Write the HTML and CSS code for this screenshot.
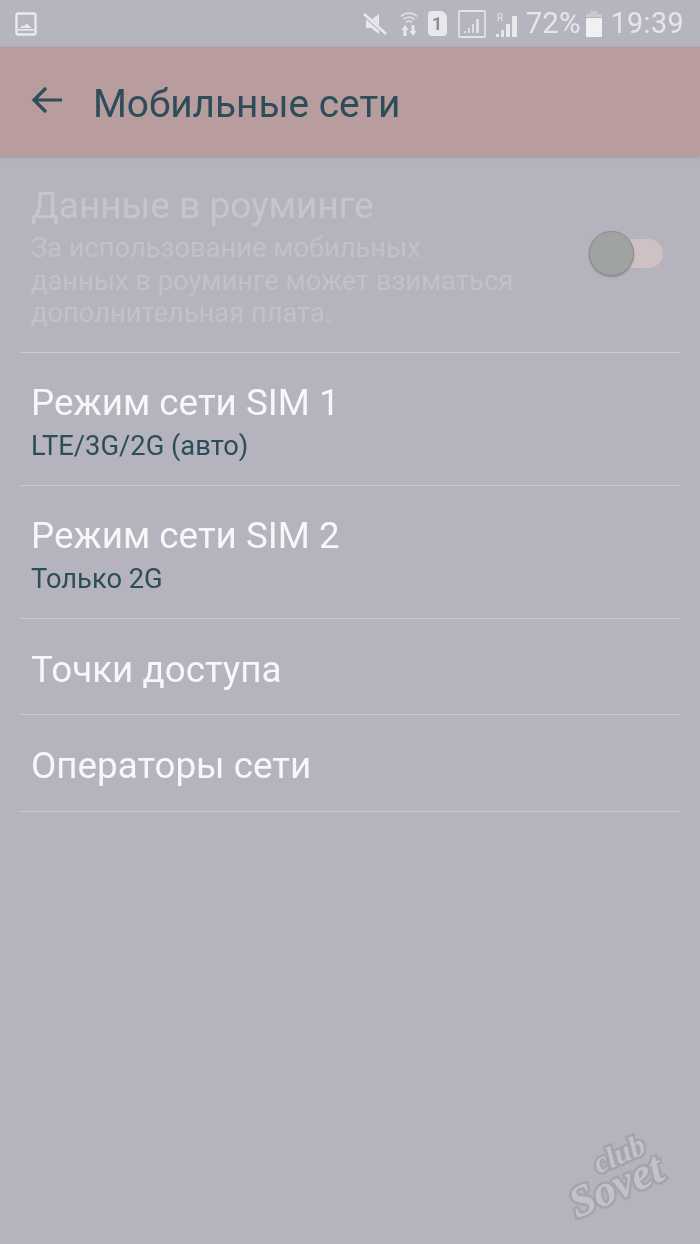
FILE: index.html
```html
<!DOCTYPE html>
<html lang="ru">
<head>
<meta charset="utf-8">
<title>Мобильные сети</title>
<link rel="stylesheet" href="styles.css">
</head>
<body>
<div class="screen">
  <div class="status">
    <svg class="ic-photo" viewBox="0 0 22 24" width="22" height="24"><rect x="1.5" y="1.5" width="19" height="21" rx="1.5" fill="none" stroke="#e9e9ee" stroke-width="2.4"/><rect x="3" y="17" width="16" height="1.6" fill="#e9e9ee"/><path d="M5 16l2.5-3 1.5 1.5 2.5-3 3 2.5 2 2z" fill="#e9e9ee"/></svg>
    <div class="status-right">
      <svg class="ic-mute" viewBox="0 0 24 24" width="24" height="24"><path d="M3 8h5l8-6v20l-8-6H3z" fill="#e8e8ec"/><path d="M1 3l22 19" stroke="#b5b3bd" stroke-width="4"/><path d="M1 2l22 20" stroke="#e8e8ec" stroke-width="3"/></svg>
      <svg class="ic-wifi" viewBox="0 0 18 26" width="18" height="26"><g fill="none" stroke="#dedee4" stroke-width="1.8"><path d="M1 5.500a11 11 0 0 1 16 0"/><path d="M3.500 8.500a7.500 7.500 0 0 1 11 0"/><path d="M6 11.500a4 4 0 0 1 6 0"/></g><path d="M1.500 19l3.500-5 3.500 5H6.500v6h-3v-6zM11.500 14h3v6h2l-3.500 5-3.500-5h2z" fill="#e8e8ec"/></svg>
      <div class="sim-badge">1</div>
      <svg class="ic-sig1" viewBox="0 0 28 28" width="28" height="28"><rect x="1" y="1" width="26" height="26" rx="1" fill="none" stroke="#e2e2e7" stroke-width="1.800"/><path d="M6 21h2v2H6zM10 18h2v5h-2zM14 14h2v9h-2zM18 9h3v14h-3z" fill="#dedee4"/></svg>
      <svg class="ic-sig2" viewBox="0 0 24 28" width="24" height="28"><path d="M1 24h3v3H1zM6 20h3v7H6zM11 14h4v13h-4zM17 6h5v21h-5z" fill="#e8e8ec"/><text x="2" y="11" class="roam">R</text></svg>
      <span class="pct">72%</span>
      <svg class="ic-batt" viewBox="0 0 16 26" width="16" height="26"><rect x="4.500" y="0" width="7" height="3" fill="#c9c9d0"/><rect x="0" y="3" width="16" height="3" fill="#c9c9d0"/><rect x="0" y="7" width="16" height="19" rx="1" fill="#f1f1f4"/></svg>
      <span class="clock">19:39</span>
    </div>
  </div>
  <header class="appbar">
    <svg class="ic-back" viewBox="0 0 32 28" width="32" height="28"><path d="M31 14H3M15 2L3 14l12 12" fill="none" stroke="#2c4d59" stroke-width="3.200"/></svg>
    <h1 class="title">Мобильные сети</h1>
  </header>
  <ul class="list">
    <li class="row row-roam">
      <div class="row-text">
        <div class="dim-title">Данные в роуминге</div>
        <div class="dim-sub">За использование мобильных<br>данных в роуминге может взиматься<br>дополнительная плата.</div>
      </div>
      <div class="switch"><span class="track"></span><span class="knob"></span></div>
    </li>
    <li class="row row-two">
      <div class="row-title">Режим сети SIM 1</div>
      <div class="row-sub">LTE/3G/2G (авто)</div>
    </li>
    <li class="row row-two">
      <div class="row-title">Режим сети SIM 2</div>
      <div class="row-sub">Только 2G</div>
    </li>
    <li class="row row-one"><div class="row-title">Точки доступа</div></li>
    <li class="row row-one"><div class="row-title">Операторы сети</div></li>
  </ul>
  <div class="watermark"><span class="wm-club">club</span><span class="wm-sovet">Sovet</span></div>
</div>
</body>
</html>
```
FILE: styles.css
```css
* { box-sizing: border-box; }
html, body { margin: 0; padding: 0; }
body { background: #b5b3bd; font-family: Roboto, "Noto Sans", sans-serif; }
.screen { position: relative; width: 700px; height: 1244px; background: #b5b3bd; overflow: hidden; filter: blur(0.4px); }
.status { height: 47px; padding: 0 16px 0 15px; display: flex; align-items: center; justify-content: space-between; background: #b6b4be; }
.status-right { display: flex; align-items: center; }
.ic-mute { margin-right: 13px; }
.ic-wifi { margin-right: 10px; }
.sim-badge { width: 19px; height: 25px; margin-right: 11px; background: #e8e8ec; border-radius: 4px 7px 4px 4px; color: #8f8e97; font-size: 18px; font-weight: 700; line-height: 25px; text-align: center; }
.ic-sig1 { margin-right: 9px; }
.ic-sig2 { margin-right: 7px; }
.roam { font-size: 10px; fill: #e4e4ea; font-family: Roboto, sans-serif; }
.pct { font-size: 29.500px; color: #e6e6ea; margin-right: 5px; line-height: 1; }
.ic-batt { margin-right: 9px; }
.clock { font-size: 28.700px; color: #e6e6ea; line-height: 1; letter-spacing: 0.4px; }
.appbar { height: 109px; display: flex; align-items: center; background: #b99c9e; box-shadow: 0 1px 3px rgba(120,118,128,.5); padding-left: 31px; position: relative; }
.ic-back { margin-right: 30px; margin-bottom: 4px; }
.title { margin: 6px 0 0; font-size: 38.800px; font-weight: 400; color: #2c4d59; line-height: 1; }
.list { list-style: none; margin: 0 20px; padding: 0; }
.row { border-bottom: 1px solid #cbcad1; padding: 0 11px; }
.row-roam { height: 197px; display: flex; align-items: flex-start; justify-content: space-between; padding-top: 30px; }
.dim-title { font-size: 37px; line-height: 40px; color: #c6c5cd; }
.dim-sub { font-size: 27.300px; line-height: 32.500px; color: #c2c1c9; margin-top: 6px; }
.switch { position: relative; width: 75px; height: 46px; margin-top: 45px; margin-right: 5px; }
.track { position: absolute; left: 30px; top: 8px; width: 44px; height: 29px; border-radius: 15px; background: #cfc0c4; }
.knob { position: absolute; left: 0; top: 0; width: 45px; height: 45px; border-radius: 50%; background: #9fa3a2; border: 1px solid #8a8c90; box-shadow: 0 1px 2px rgba(90,90,100,.5); }
.row-two { height: 133px; padding-top: 30px; }
.row-one { height: 96.400px; display: flex; align-items: center; padding-top: 6px; }
.row-title { font-size: 36.800px; line-height: 40px; color: #f7f7f9; }
.row-sub { font-size: 27.300px; line-height: 32px; color: #2c4d59; margin-top: 7px; }
.watermark { position: absolute; left: 566px; top: 1142px; width: 110px; height: 70px; transform: rotate(-24deg); font-family: "Liberation Serif", serif; font-style: italic; font-weight: 700; color: #c3c2c9; -webkit-text-stroke: 5px #a5a4ac; paint-order: stroke fill; }
.wm-club { position: absolute; left: 36px; top: -2px; font-size: 30px; line-height: 30px; }
.wm-sovet { position: absolute; left: -2px; top: 18px; font-size: 44px; line-height: 46px; }
```
